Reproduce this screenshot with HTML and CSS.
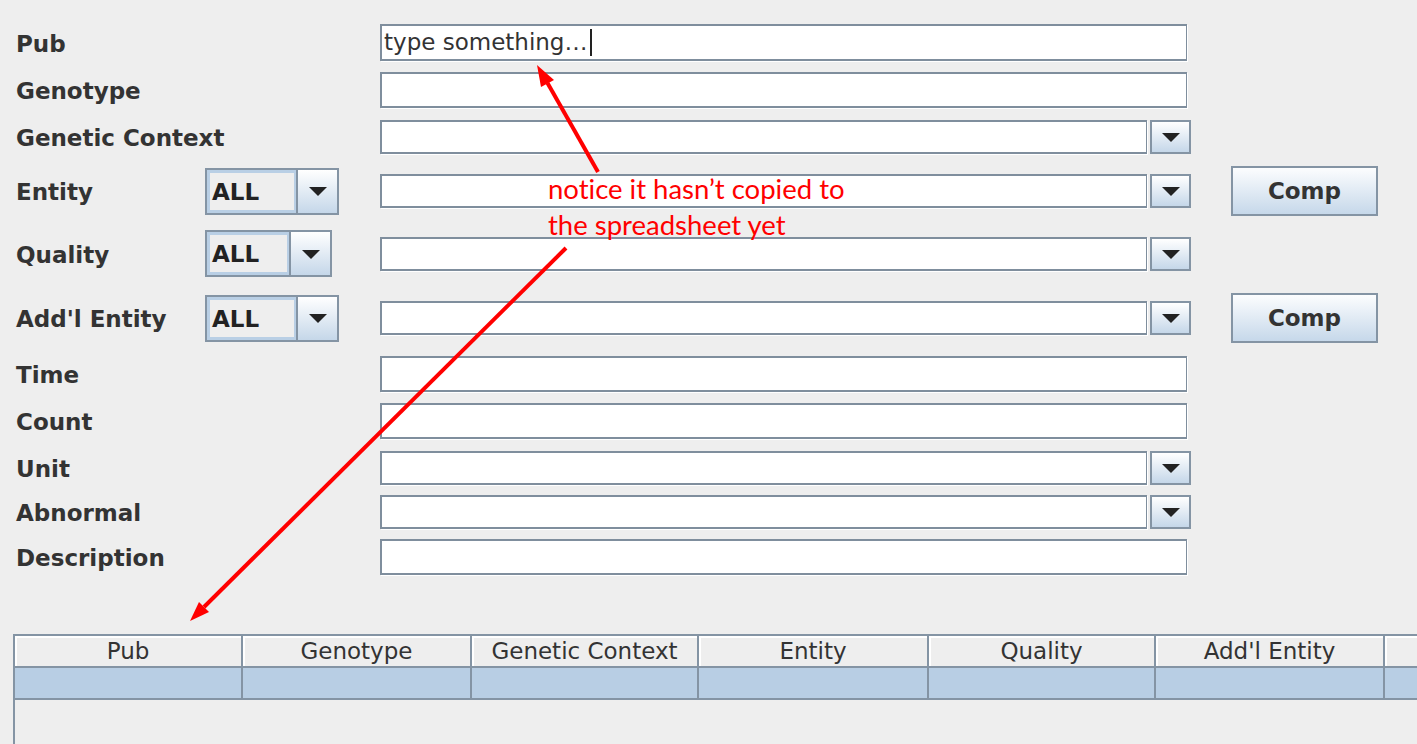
FILE: index.html
```html
<!DOCTYPE html>
<html>
<head>
<meta charset="utf-8">
<title>Phenotype editor</title>
<link rel="stylesheet" href="styles.css">
</head>
<body>
<div class="page">
  <div class="form">
    <div class="label r1">Pub</div>
    <div class="tf tall r1"><span class="typed">type something…</span><span class="caret"></span></div>

    <div class="label">Genotype</div>
    <div class="tf"></div>

    <div class="label">Genetic Context</div>
    <div class="combo"><div class="cfield"></div><div class="cbtn"><span class="tri"></span></div></div>

    <div class="label">Entity</div>
    <div class="scombo"><div class="stext"><span>ALL</span></div><div class="sbtn"><span class="tri"></span></div></div>
    <div class="combo"><div class="cfield"></div><div class="cbtn"><span class="tri"></span></div></div>
    <div class="btn">Comp</div>

    <div class="label">Quality</div>
    <div class="scombo narrow"><div class="stext"><span>ALL</span></div><div class="sbtn"><span class="tri"></span></div></div>
    <div class="combo"><div class="cfield"></div><div class="cbtn"><span class="tri"></span></div></div>

    <div class="label">Add'l Entity</div>
    <div class="scombo"><div class="stext"><span>ALL</span></div><div class="sbtn"><span class="tri"></span></div></div>
    <div class="combo"><div class="cfield"></div><div class="cbtn"><span class="tri"></span></div></div>
    <div class="btn">Comp</div>

    <div class="label">Time</div>
    <div class="tf"></div>

    <div class="label">Count</div>
    <div class="tf"></div>

    <div class="label">Unit</div>
    <div class="combo"><div class="cfield"></div><div class="cbtn"><span class="tri"></span></div></div>

    <div class="label">Abnormal</div>
    <div class="combo"><div class="cfield"></div><div class="cbtn"><span class="tri"></span></div></div>

    <div class="label">Description</div>
    <div class="tf"></div>
  </div>

  <div class="table">
    <div class="th">Pub</div>
    <div class="th">Genotype</div>
    <div class="th">Genetic Context</div>
    <div class="th">Entity</div>
    <div class="th">Quality</div>
    <div class="th">Add'l Entity</div>
    <div class="th"></div>
    <div class="td"></div>
    <div class="td"></div>
    <div class="td"></div>
    <div class="td"></div>
    <div class="td"></div>
    <div class="td"></div>
    <div class="td"></div>
  </div>

  <svg class="arrows" width="1417" height="744" viewBox="0 0 1417 744">
    <line x1="598" y1="172" x2="547.5" y2="83" stroke="#ff0000" stroke-width="4"/>
    <polygon points="537,65 554,80 541,87" fill="#ff0000"/>
    <line x1="566" y1="248" x2="204" y2="607" stroke="#ff0000" stroke-width="4"/>
    <polygon points="190,621 209,612 199,602" fill="#ff0000"/>
  </svg>

  <div class="note">notice it hasn’t copied to<br>the spreadsheet yet</div>
</div>
</body>
</html>
```

FILE: styles.css
```css
html, body {
  margin: 0;
  padding: 0;
  background: #eeeeee;
  overflow: hidden;
}

.page {
  position: relative;
  width: 1417px;
  height: 744px;
  overflow: hidden;
  font-family: "DejaVu Sans", "Liberation Sans", sans-serif;
  color: #333333;
}

.form {
  display: grid;
  grid-template-columns: 189px 175px 811px 40px 147px;
  grid-template-rows: 49px 46px 48px 60px 65px 64px 47px 48px 46px 42px 48px;
  padding: 18px 0 0 16px;
}

.label {
  grid-column: 1;
  align-self: center;
  font-weight: bold;
  font-size: 23px;
  color: #333333;
  white-space: nowrap;
  line-height: 1;
  padding-top: 3px;
}

.tf {
  grid-column: 3;
  align-self: center;
  width: 807px;
  height: 36px;
  box-sizing: border-box;
  background: #ffffff;
  border: 2px solid #7f8e9d;
  border-right-width: 1px;
  box-shadow: 1px 1px 0 #ffffff;
  display: flex;
  align-items: center;
  padding-left: 2px;
}

.tf.tall {
  height: 37px;
}

.typed {
  font-size: 23px;
  color: #333333;
  line-height: 1;
}

.caret {
  display: inline-block;
  width: 2px;
  height: 27px;
  background: #222222;
  margin-left: 3px;
}

.combo {
  grid-column: 3;
  align-self: center;
  display: flex;
  gap: 3px;
  height: 34px;
}

.cfield {
  width: 767px;
  box-sizing: border-box;
  background: #ffffff;
  border: 2px solid #7f8e9d;
  border-right-width: 1px;
  box-shadow: 1px 1px 0 #ffffff;
}

.cbtn {
  width: 41px;
  box-sizing: border-box;
  border: 2px solid #8494a4;
  background: linear-gradient(#ffffff, #c5d7e9);
  display: flex;
  align-items: center;
  justify-content: center;
}

.tri {
  display: block;
  width: 0;
  height: 0;
  border-left: 9px solid transparent;
  border-right: 9px solid transparent;
  border-top: 9px solid #222222;
  margin-top: 1px;
}

.scombo {
  grid-column: 2;
  align-self: center;
  width: 134px;
  height: 47px;
  box-sizing: border-box;
  border: 2px solid #8494a4;
  display: flex;
}

.scombo.narrow {
  width: 127px;
}

.stext {
  flex: 1;
  background: #eeeeee;
  border: 3px solid #b9cfe5;
  border-right: 2px solid #b9cfe5;
  display: flex;
  align-items: center;
  padding-left: 2px;
}

.stext span {
  font-size: 23px;
  font-weight: bold;
  color: #222222;
  line-height: 1;
  padding-top: 2px;
}

.sbtn {
  width: 39px;
  border-left: 2px solid #8494a4;
  background: linear-gradient(#ffffff, #c5d7e9);
  display: flex;
  align-items: center;
  justify-content: center;
}

.btn {
  grid-column: 5;
  align-self: center;
  width: 147px;
  height: 50px;
  box-sizing: border-box;
  border: 2px solid #8494a4;
  background: linear-gradient(#fcfdfe, #c6d8ea);
  display: flex;
  align-items: center;
  justify-content: center;
  font-weight: bold;
  font-size: 23px;
  color: #333333;
}

.table {
  margin: 53px 0 0 13px;
  display: grid;
  grid-template-columns: 228px 229px 227px 230px 227px 229px 229px;
  grid-template-rows: 32px 32px;
  border-left: 2px solid #8494a4;
  border-top: 2px solid #8494a4;
  height: 200px;
  align-content: start;
}

.th {
  box-sizing: border-box;
  background: #eeeeee;
  border-right: 2px solid #8494a4;
  border-bottom: 2px solid #8494a4;
  box-shadow: inset 2px 2px 0 #ffffff;
  font-size: 23px;
  color: #333333;
  text-align: center;
  line-height: 31px;
  white-space: nowrap;
  overflow: hidden;
}

.td {
  box-sizing: border-box;
  background: #b8cee4;
  border-right: 2px solid #8494a4;
  border-bottom: 2px solid #8494a4;
}

.arrows {
  position: absolute;
  left: 0;
  top: 0;
  pointer-events: none;
}

.note {
  position: absolute;
  left: 548px;
  top: 171px;
  font-family: Lato, "Open Sans", sans-serif;
  font-size: 27.5px;
  font-variant-ligatures: none;
  line-height: 36px;
  color: #ff0000;
  white-space: nowrap;
}
```
